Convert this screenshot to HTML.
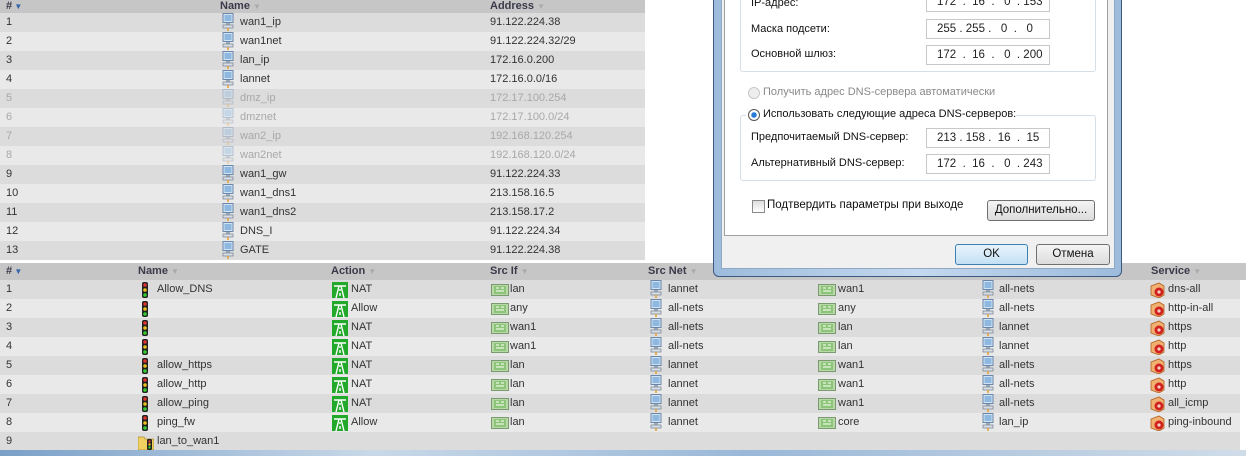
<!DOCTYPE html>
<html><head><meta charset="utf-8"><style>
*{margin:0;padding:0;box-sizing:border-box}
body{width:1246px;height:456px;overflow:hidden;background:#fff;position:relative;font-family:"Liberation Sans","DejaVu Sans",sans-serif;font-size:11px;color:#333}
.a{position:absolute;white-space:nowrap}
.row{position:absolute;left:0;height:19px}
.o{background:#dcdcdc}.e{background:#e9e9e9}
.hd{position:absolute;background:#c6c6c6;font-weight:bold;color:#3a3a4a}
.t{position:absolute;line-height:19px;white-space:nowrap}
.dis{color:#a8a8a8}
.ic{position:absolute}
.win{font-family:"Liberation Sans","DejaVu Sans",sans-serif;font-size:11px;color:#111}
.inp{position:absolute;left:926px;width:124px;height:20px;border:1px solid #c8c8c8;background:#fff;line-height:18px;font-size:11.5px;color:#222;padding-left:10px;white-space:nowrap}
.btn{position:absolute;height:21px;border:1px solid #707070;border-radius:3px;background:linear-gradient(#f4f4f4,#dcdcdc);text-align:center;line-height:19px;font-size:11.5px;color:#111}
.grp{position:absolute;border:1px solid #d5dfe5;border-radius:3px}
</style></head><body>

<svg width="0" height="0" style="position:absolute">
<defs>
<symbol id="pc" viewBox="0 0 12 18"><rect x="1" y="0.5" width="10" height="9" fill="#cfe3f5" stroke="#6a86a8"/><rect x="2.5" y="2" width="7" height="6" fill="#8fb8e0"/><path d="M4 10h4v2H4z" fill="#9aa8b8"/><rect x="1" y="12" width="10" height="3" fill="#d8dee6" stroke="#7d8a99" stroke-width="0.8"/><path d="M6 15v3" stroke="#e0a030" stroke-width="1.5"/></symbol>
<symbol id="tl" viewBox="0 0 8 16"><rect x="1" y="0" width="6" height="16" rx="2" fill="#222"/><circle cx="4" cy="3" r="1.8" fill="#d33"/><circle cx="4" cy="8" r="1.8" fill="#e8c020"/><circle cx="4" cy="13" r="1.8" fill="#3c3"/></symbol>
<symbol id="ac" viewBox="0 0 16 16"><rect width="16" height="16" fill="#22a82a"/><path d="M2 4h12M7 4L4 16M9 4l3 12M8 7v2M8 11v3" stroke="#fff" stroke-width="1.4" fill="none"/></symbol>
<symbol id="if" viewBox="0 0 18 12"><rect x="0.5" y="0.5" width="17" height="11" fill="#b8d8a8" stroke="#7a9a70"/><rect x="3" y="2" width="12" height="8" fill="#8cc47a"/><path d="M5 4h3M10 4h3M5 7h8" stroke="#e8f5e0" stroke-width="1.2"/></symbol>
<symbol id="sv" viewBox="0 0 16 16"><path d="M1 4l8-3 5 3v9l-5 3-8-3z" fill="#f0b070" stroke="#b06020" stroke-width="0.8"/><circle cx="9" cy="10" r="4.5" fill="#d02020"/><circle cx="9" cy="10" r="1.6" fill="#f8d0c0"/></symbol>
<symbol id="fd" viewBox="0 0 16 16"><path d="M0 3h6l1 2h9v11H0z" fill="#f0d060" stroke="#b09030" stroke-width="0.8"/><rect x="9" y="5" width="5" height="11" rx="1.5" fill="#222"/><circle cx="11.5" cy="7.5" r="1.2" fill="#d33"/><circle cx="11.5" cy="10.5" r="1.2" fill="#e8c020"/><circle cx="11.5" cy="13.5" r="1.2" fill="#3c3"/></symbol>
</defs></svg>

<!-- TOP TABLE -->
<div class="hd" style="left:0;top:0;width:645px;height:13px"></div>
<div class="a" style="left:6px;top:0;font-weight:bold;color:#3a3a4a;line-height:12px">#<span style="color:#3366aa;font-size:8px"> ▼</span></div>
<div class="a" style="left:220px;top:0;font-weight:bold;color:#3a3a4a;line-height:12px">Name <span style="color:#aaa;font-size:8px">▼</span></div>
<div class="a" style="left:490px;top:0;font-weight:bold;color:#3a3a4a;line-height:12px">Address <span style="color:#aaa;font-size:8px">▼</span></div>

<div id="toptbl"></div>

<!-- BOTTOM TABLE -->
<div class="hd" style="left:0;top:263px;width:1246px;height:17px"></div>
<div class="a" style="left:6px;top:263px;font-weight:bold;color:#3a3a4a;line-height:17px">#<span style="color:#3366aa;font-size:8px"> ▼</span></div>
<div class="a" style="left:138px;top:263px;font-weight:bold;color:#3a3a4a;line-height:17px">Name <span style="color:#aaa;font-size:8px">▼</span></div>
<div class="a" style="left:331px;top:263px;font-weight:bold;color:#3a3a4a;line-height:17px">Action <span style="color:#aaa;font-size:8px">▼</span></div>
<div class="a" style="left:490px;top:263px;font-weight:bold;color:#3a3a4a;line-height:17px">Src If <span style="color:#aaa;font-size:8px">▼</span></div>
<div class="a" style="left:648px;top:263px;font-weight:bold;color:#3a3a4a;line-height:17px">Src Net <span style="color:#aaa;font-size:8px">▼</span></div>
<div class="a" style="left:1151px;top:263px;font-weight:bold;color:#3a3a4a;line-height:17px">Service <span style="color:#aaa;font-size:8px">▼</span></div>
<div id="bottbl"></div>
<div class="a" style="left:0;top:450px;width:1246px;height:6px;background:linear-gradient(90deg,#7aa0c8,#c8d8e8 30%,#9ab8d8 60%,#d0dce8)"></div>

<!-- DIALOG -->
<div class="a" style="left:713px;top:-10px;width:409px;height:287px;border:1px solid #3a5a80;border-radius:0 0 6px 6px;background:linear-gradient(90deg,#9dbbdc,#c4d8ee 50%,#9dbbdc)"></div>
<div class="a" style="left:721px;top:-10px;width:394px;height:279px;background:#f0f0f0;border:1px solid #8fa8c4"></div>
<div class="a" style="left:724px;top:-10px;width:384px;height:246px;background:#fff;border:1px solid #a0a0a0"></div>
<div class="grp" style="left:740px;top:-10px;width:356px;height:82px"></div>
<div class="a win" style="left:751px;top:-3px">IP-адрес:</div>
<div class="inp" style="top:-8px">172&nbsp; . &nbsp;16&nbsp; . &nbsp;&nbsp;0&nbsp; . 153</div>
<div class="a win" style="left:751px;top:23px">Маска подсети:</div>
<div class="inp" style="top:19px">255 . 255 . &nbsp;&nbsp;0&nbsp; . &nbsp;&nbsp;0</div>
<div class="a win" style="left:751px;top:48px">Основной шлюз:</div>
<div class="inp" style="top:45px">172&nbsp; . &nbsp;16&nbsp; . &nbsp;&nbsp;0&nbsp; . 200</div>
<div class="a" style="left:748px;top:87px;width:12px;height:12px;border-radius:50%;border:1px solid #c8c8c8;background:#eee"></div>
<div class="a win" style="left:763px;top:86px;color:#8a8a8a">Получить адрес DNS-сервера автоматически</div>
<div class="grp" style="left:740px;top:115px;width:356px;height:66px"></div>
<div class="a" style="left:746px;top:108px;width:270px;height:14px;background:#fff"></div>
<div class="a" style="left:748px;top:109px;width:12px;height:12px;border-radius:50%;border:1px solid #555;background:radial-gradient(#2a7ad8 0 2.5px,#fff 3px)"></div>
<div class="a win" style="left:763px;top:108px">Использовать следующие адреса DNS-серверов:</div>
<div class="a win" style="left:751px;top:131px">Предпочитаемый DNS-сервер:</div>
<div class="inp" style="top:128px">213 . 158 . &nbsp;16&nbsp; . &nbsp;15</div>
<div class="a win" style="left:751px;top:157px">Альтернативный DNS-сервер:</div>
<div class="inp" style="top:154px">172&nbsp; . &nbsp;16&nbsp; . &nbsp;&nbsp;0&nbsp; . 243</div>
<div class="a" style="left:752px;top:200px;width:13px;height:13px;border:1px solid #8a8a8a;background:linear-gradient(#ddd,#fff)"></div>
<div class="a win" style="left:767px;top:199px;font-size:11.5px">Подтвердить параметры при выходе</div>
<div class="btn" style="left:987px;top:200px;width:108px">Дополнительно...</div>
<div class="btn" style="left:955px;top:244px;width:73px;border-color:#3c7fb1;background:linear-gradient(#e8f4fc,#c4e0f4)">OK</div>
<div class="btn" style="left:1036px;top:244px;width:74px">Отмена</div>

<script>
(function(){
var T=[["wan1_ip","91.122.224.38"],["wan1net","91.122.224.32/29"],["lan_ip","172.16.0.200"],["lannet","172.16.0.0/16"],["dmz_ip","172.17.100.254",1],["dmznet","172.17.100.0/24",1],["wan2_ip","192.168.120.254",1],["wan2net","192.168.120.0/24",1],["wan1_gw","91.122.224.33"],["wan1_dns1","213.158.16.5"],["wan1_dns2","213.158.17.2"],["DNS_I","91.122.224.34"],["GATE","91.122.224.38"]];
var h="";
T.forEach(function(r,i){var y=13+i*19;var d=r[2]?' dis':'';var op=r[2]?'opacity:.4;':'';
h+='<div class="row '+(i%2?'e':'o')+'" style="top:'+y+'px;width:645px"></div>';
h+='<div class="t'+d+'" style="left:6px;top:'+y+'px">'+(i+1)+'</div>';
h+='<svg class="ic" style="left:222px;top:'+y+'px;'+op+'" width="12" height="18"><use href="#pc"/></svg>';
h+='<div class="t'+d+'" style="left:240px;top:'+y+'px">'+r[0]+'</div>';
h+='<div class="t'+d+'" style="left:490px;top:'+y+'px">'+r[1]+'</div>';});
document.getElementById('toptbl').outerHTML=h;
var B=[["Allow_DNS","NAT","lan","lannet","wan1","all-nets","dns-all"],["","Allow","any","all-nets","any","all-nets","http-in-all"],["","NAT","wan1","all-nets","lan","lannet","https"],["","NAT","wan1","all-nets","lan","lannet","http"],["allow_https","NAT","lan","lannet","wan1","all-nets","https"],["allow_http","NAT","lan","lannet","wan1","all-nets","http"],["allow_ping","NAT","lan","lannet","wan1","all-nets","all_icmp"],["ping_fw","Allow","lan","lannet","core","lan_ip","ping-inbound"]];
h="";
B.forEach(function(r,i){var y=280+i*19;
h+='<div class="row '+(i%2?'e':'o')+'" style="top:'+y+'px;width:1240px"></div>';
h+='<div class="t" style="left:6px;top:'+y+'px">'+(i+1)+'</div>';
h+='<svg class="ic" style="left:141px;top:'+(y+2)+'px" width="8" height="16"><use href="#tl"/></svg>';
h+='<div class="t" style="left:157px;top:'+y+'px">'+r[0]+'</div>';
h+='<svg class="ic" style="left:332px;top:'+(y+2)+'px" width="16" height="16"><use href="#ac"/></svg>';
h+='<div class="t" style="left:351px;top:'+y+'px">'+r[1]+'</div>';
h+='<svg class="ic" style="left:491px;top:'+(y+4)+'px" width="18" height="12"><use href="#if"/></svg>';
h+='<div class="t" style="left:510px;top:'+y+'px">'+r[2]+'</div>';
h+='<svg class="ic" style="left:650px;top:'+y+'px" width="12" height="18"><use href="#pc"/></svg>';
h+='<div class="t" style="left:668px;top:'+y+'px">'+r[3]+'</div>';
h+='<svg class="ic" style="left:818px;top:'+(y+4)+'px" width="18" height="12"><use href="#if"/></svg>';
h+='<div class="t" style="left:838px;top:'+y+'px">'+r[4]+'</div>';
h+='<svg class="ic" style="left:982px;top:'+y+'px" width="12" height="18"><use href="#pc"/></svg>';
h+='<div class="t" style="left:999px;top:'+y+'px">'+r[5]+'</div>';
h+='<svg class="ic" style="left:1150px;top:'+(y+2)+'px" width="16" height="16"><use href="#sv"/></svg>';
h+='<div class="t" style="left:1168px;top:'+y+'px">'+r[6]+'</div>';});
var y=432;
h+='<div class="row o" style="top:'+y+'px;width:1240px"></div><div class="t" style="left:6px;top:'+y+'px">9</div><svg class="ic" style="left:138px;top:'+(y+2)+'px" width="16" height="16"><use href="#fd"/></svg><div class="t" style="left:157px;top:'+y+'px">lan_to_wan1</div>';
document.getElementById('bottbl').outerHTML=h;
})();
</script>
</body></html>
